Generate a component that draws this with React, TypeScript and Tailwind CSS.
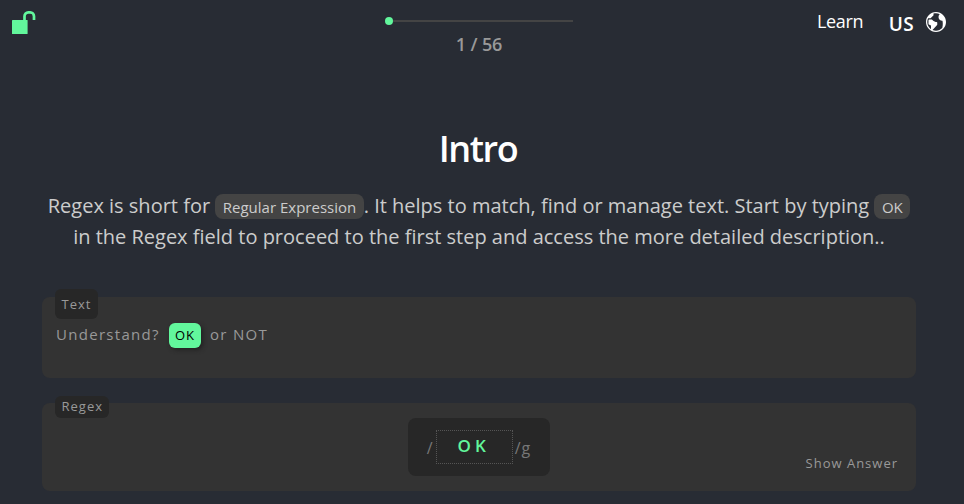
import { ImEarth } from "react-icons/im";

function UnlockIcon() {
  return (
    <svg width="24" height="25" viewBox="0 0 24 25" fill="none">
      <rect x="0" y="10" width="15.6" height="14" rx="0.6" fill="#62f79c" />
      <path d="M12.5 11V6.2a3.8 3.8 0 0 1 3.8-3.8h1.9a3.8 3.8 0 0 1 3.8 3.8V10" stroke="#62f79c" strokeWidth="2.7" />
    </svg>
  );
}

function Header() {
  return (
    <header className="flex h-[60px] items-start justify-between pl-3 pr-[18px]">
      <div className="w-[373px] pt-[10px]">
        <UnlockIcon />
      </div>
      <div className="flex w-[188px] flex-col items-center pt-[17px]">
        <div className="flex h-2 w-full items-center">
          <span className="size-2 rounded-full bg-[#62f79c]" />
          <span className="h-[2px] flex-1 bg-[#444]" />
        </div>
        <div className="mt-[7px] text-[18px] font-semibold leading-6 tracking-[-0.15px] text-[#999]">1 / 56</div>
      </div>
      <nav className="flex w-[373px] items-start justify-end text-white">
        <a className="mt-[9px] text-[18px] font-medium leading-6 tracking-[-0.3px]">Learn</a>
        <span className="ml-[25.5px] mt-[12px] text-[19px] font-semibold leading-6 tracking-[0.3px]">US</span>
        <ImEarth className="ml-3 mt-3" size={20} />
      </nav>
    </header>
  );
}

function Code({ children }: { children: string }) {
  return (
    <span className="relative top-[-0.5px] inline-block rounded-lg bg-[#444] px-[7.5px] pt-[2px] text-[15px] leading-[23px]">{children}</span>
  );
}

export default function App() {
  return (
    <div className="h-[504px] overflow-hidden bg-[#282c34] font-['Open_Sans',sans-serif]">
      <Header />
      <main className="ml-[42px] w-[874px]">
        <h1 className="pr-[2px] pt-[64px] text-center text-[36px] font-semibold leading-[50px] tracking-[-1.4px] text-white">Intro</h1>
        <p className="mt-4 text-center text-[20px] leading-[31px] text-[#ccc]">
          Regex is short for <Code>Regular Expression</Code>. It helps to match, find or manage text. Start by typing <Code>OK</Code>
          <br />
          in the Regex field to proceed to the first step and access the more detailed description..
        </p>
        <section className="relative mt-[45px] h-[81px] rounded-lg bg-[#333] pl-[14px] pt-[25px] tracking-[1px] text-[#999]">
          <span className="absolute left-[13px] top-[-8px] h-[30px] w-[43px] rounded-md bg-[#272727] pl-[6.5px] text-[13px] leading-[30px]">Text</span>
          <div className="flex items-start text-[15px] leading-[24px]">
            <span className="w-[113px] tracking-[1.3px]">Understand?</span>
            <span className="mt-[0.5px] h-[25px] w-8 rounded-md bg-[#62f79c] pl-[6px] text-[13px] leading-[25px] text-black shadow-[2px_2px_4px_#222]">OK</span>
            <span className="ml-[9px] tracking-[1.3px]">or NOT</span>
          </div>
        </section>
        <section className="relative mt-[25px] flex h-[88px] justify-center rounded-lg bg-[#333] pt-[15px] tracking-[1px] text-[#999]">
          <span className="absolute left-[13px] top-[-7px] h-[22px] w-[54px] rounded-md bg-[#272727] pl-[6.5px] text-[13px] leading-[21px]">Regex</span>
          <div className="flex h-[58px] w-[142px] items-center justify-center rounded-lg bg-[#272727] text-[16px] text-[#777]">
            <span className="mr-[2px] pt-[2px]">/</span>
            <span className="flex h-[34px] w-[77px] items-center justify-center border border-dotted border-[#555] pb-[2px] pr-[1px] text-[17px] font-semibold tracking-[4px] text-[#62f79c]">OK</span>
            <span className="ml-[2px] pt-[2px]">/g</span>
          </div>
          <button className="absolute bottom-[18px] right-[18px] text-[13px] leading-5 tracking-[1px]">Show Answer</button>
        </section>
      </main>
    </div>
  );
}
